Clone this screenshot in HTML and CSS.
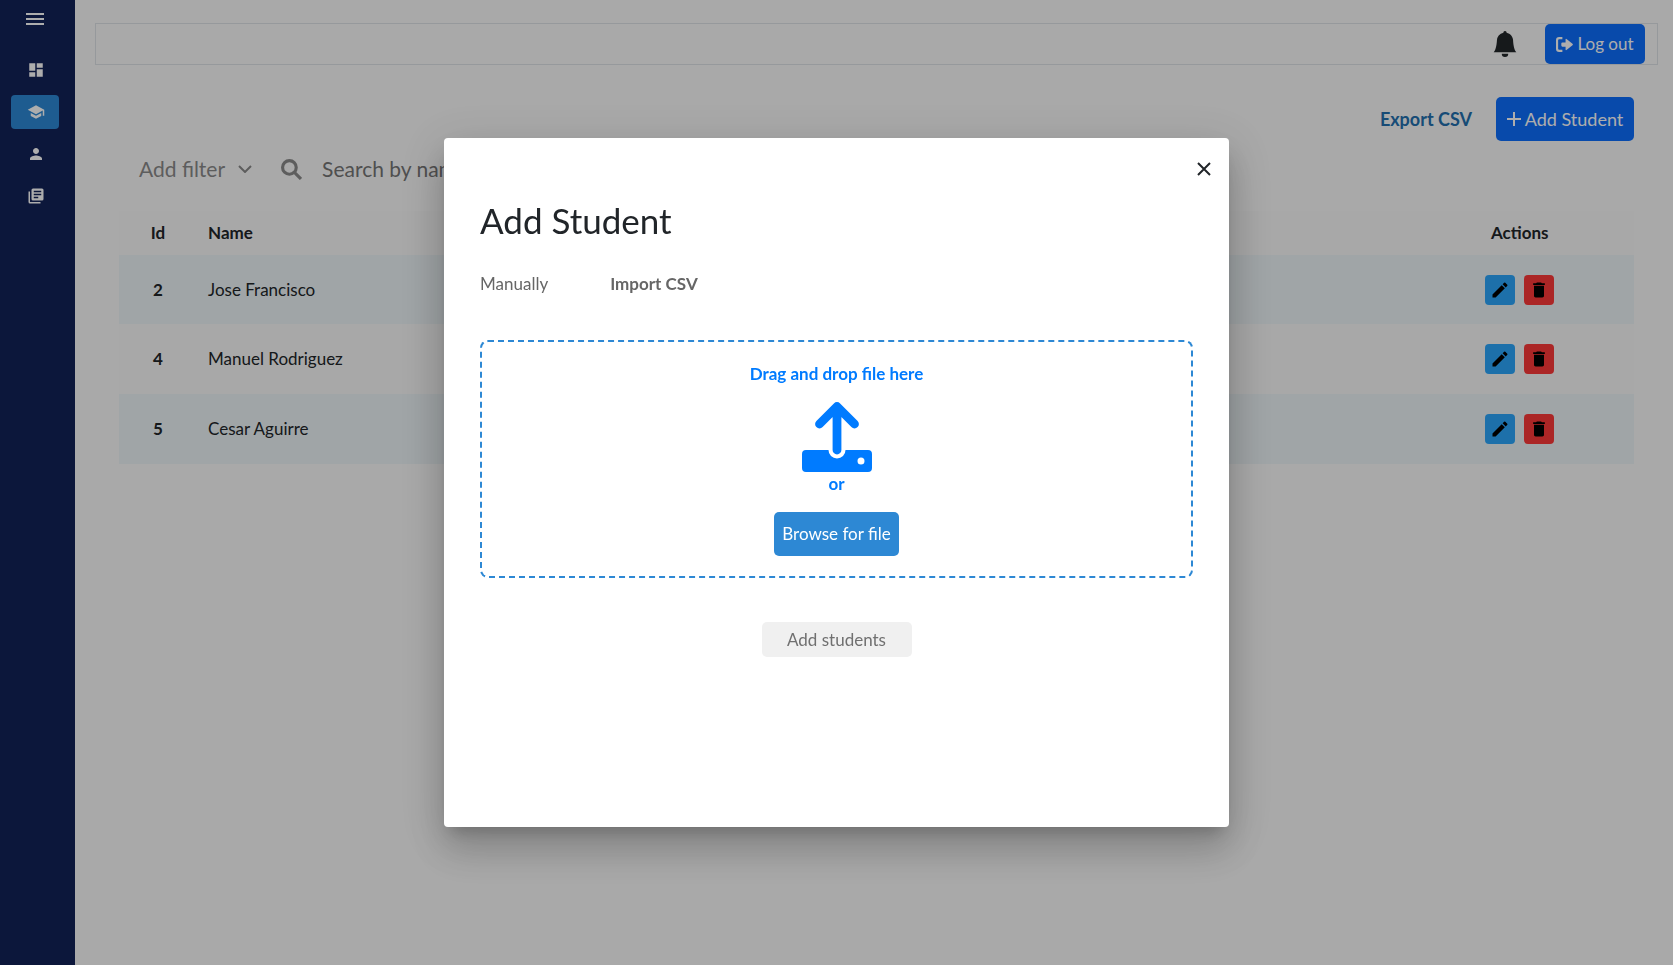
FILE: index.html
```html
<!DOCTYPE html>
<html lang="en">
<head>
<meta charset="utf-8">
<meta name="viewport" content="width=device-width, initial-scale=1">
<title>Students</title>
<link rel="stylesheet" href="styles.css">
</head>
<body>
<svg class="sprite" aria-hidden="true">
  <symbol id="pencil" viewBox="0 0 24 24"><path d="M3 17.25V21h3.75L17.81 9.94l-3.75-3.75L3 17.25zM20.71 7.04a1 1 0 0 0 0-1.41l-2.34-2.34a1 1 0 0 0-1.41 0l-1.83 1.83 3.75 3.75 1.83-1.83z"/></symbol>
  <symbol id="trash" viewBox="0 0 24 24"><path d="M6 19c0 1.100.9 2 2 2h8c1.100 0 2-.9 2-2V7H6v12zM19 4h-3.500l-1-1h-5l-1 1H5v2h14V4z"/></symbol>
</svg>
<div class="app">
  <nav class="sidebar" aria-label="Main">
    <button class="menu-button" type="button" aria-label="Menu"><svg class="menu-icon" viewBox="0 0 24 24"><path d="M3 18h18v-2H3v2zm0-5h18v-2H3v2zm0-7v2h18V6H3z"/></svg></button>
    <a class="nav-link" href="#dashboard" aria-label="Dashboard"><svg class="nav-icon" viewBox="0 0 24 24"><path d="M3 13h8V3H3v10zm0 8h8v-6H3v6zm10 0h8V11h-8v10zm0-18v6h8V3h-8z"/></svg></a>
    <a class="nav-link active" href="#students" aria-label="Students"><svg class="nav-icon" viewBox="0 0 24 24"><path d="M5 13.180v4L12 21l7-3.820v-4L12 17l-7-3.820zM12 3L1 9l11 6 9-4.910V17h2V9L12 3z"/></svg></a>
    <a class="nav-link" href="#profile" aria-label="Profile"><svg class="nav-icon" viewBox="0 0 24 24"><path d="M12 12c2.210 0 4-1.790 4-4s-1.790-4-4-4-4 1.790-4 4 1.790 4 4 4zm0 2c-2.670 0-8 1.340-8 4v2h16v-2c0-2.660-5.330-4-8-4z"/></svg></a>
    <a class="nav-link" href="#library" aria-label="Library"><svg class="nav-icon" viewBox="0 0 24 24"><path d="M4 6H2v14a2 2 0 0 0 2 2h14v-2H4V6zm16-4H8a2 2 0 0 0-2 2v12a2 2 0 0 0 2 2h12a2 2 0 0 0 2-2V4a2 2 0 0 0-2-2zm-1 9H9V9h10v2zm-4 4H9v-2h6v2zm4-8H9V5h10v2z"/></svg></a>
  </nav>
  <div class="page">
    <header class="topbar">
      <button class="bell" type="button" aria-label="Notifications"><svg class="bell-icon" viewBox="0 0 16 16"><path d="M8 16a2 2 0 0 0 2-2H6a2 2 0 0 0 2 2zm.995-14.901a1 1 0 1 0-1.990 0A5.002 5.002 0 0 0 3 6c0 1.098-.5 6-2 7h14c-1.500-1-2-5.902-2-7 0-2.420-1.720-4.440-4.005-4.901z"/></svg></button>
      <button class="button logout" type="button"><svg class="logout-icon" viewBox="0 0 16 14"><path d="M6 1H3a2 2 0 0 0-2 2v8a2 2 0 0 0 2 2h3" fill="none" stroke="currentColor" stroke-width="2"/><path d="M6 5h3V2.500q0-1.500 1.200-.5L15.500 6.200q.8.8 0 1.600L10.200 12q-1.200 1-1.200-.5V9H6q-1 0-1-1V6q0-1 1-1z"/></svg>Log out</button>
    </header>
    <main class="content">
      <div class="toolbar">
        <a class="export" href="#export">Export CSV</a>
        <button class="button add" type="button"><svg class="plus-icon" viewBox="0 0 14 14"><path d="M7 0v14M0 7h14" stroke="currentColor" stroke-width="2"/></svg>Add Student</button>
      </div>
      <div class="filters">
        <button class="filter" type="button">Add filter<svg class="chevron" viewBox="0 0 14 8"><path d="M1 1l6 6 6-6" fill="none" stroke="currentColor" stroke-width="2"/></svg></button>
        <label class="search"><svg class="search-icon" viewBox="0 0 20 20"><circle cx="8" cy="8" r="6.500" fill="none" stroke="currentColor" stroke-width="3"/><path d="M13 13l6 6" stroke="currentColor" stroke-width="3"/></svg><input class="search-input" type="search" placeholder="Search by name" aria-label="Search by name"></label>
      </div>
      <table class="students">
        <thead><tr><th class="id">Id</th><th class="name">Name</th><th class="actions">Actions</th></tr></thead>
        <tbody>
          <tr><th class="id" scope="row">2</th><td class="name">Jose Francisco</td><td class="actions"><div class="row-actions"><button class="icon-button edit" type="button" aria-label="Edit"><svg class="action-icon"><use href="#pencil"/></svg></button><button class="icon-button delete" type="button" aria-label="Delete"><svg class="action-icon"><use href="#trash"/></svg></button></div></td></tr>
          <tr><th class="id" scope="row">4</th><td class="name">Manuel Rodriguez</td><td class="actions"><div class="row-actions"><button class="icon-button edit" type="button" aria-label="Edit"><svg class="action-icon"><use href="#pencil"/></svg></button><button class="icon-button delete" type="button" aria-label="Delete"><svg class="action-icon"><use href="#trash"/></svg></button></div></td></tr>
          <tr><th class="id" scope="row">5</th><td class="name">Cesar Aguirre</td><td class="actions"><div class="row-actions"><button class="icon-button edit" type="button" aria-label="Edit"><svg class="action-icon"><use href="#pencil"/></svg></button><button class="icon-button delete" type="button" aria-label="Delete"><svg class="action-icon"><use href="#trash"/></svg></button></div></td></tr>
        </tbody>
      </table>
    </main>
  </div>
</div>
<div class="backdrop">
  <section class="modal" role="dialog" aria-modal="true" aria-labelledby="modal-title">
    <button class="close" type="button" aria-label="Close"><svg class="close-icon" viewBox="0 0 14 14"><path d="M1 1l12 12M13 1L1 13" stroke="currentColor" stroke-width="2"/></svg></button>
    <h1 class="title" id="modal-title">Add Student</h1>
    <div class="tabs" role="tablist">
      <button class="tab" type="button" role="tab" aria-selected="false">Manually</button>
      <button class="tab selected" type="button" role="tab" aria-selected="true">Import CSV</button>
    </div>
    <div class="dropzone">
      <p class="hint">Drag and drop file here</p>
      <svg class="upload-icon" viewBox="0 0 70 70"><path d="M35 5v43M17.500 22L35 4.500 52.500 22" fill="none" stroke="currentColor" stroke-width="8.800" stroke-linecap="round" stroke-linejoin="round"/><path d="M4 48h22.500a8.500 8.500 0 0 0 17 0H66a4 4 0 0 1 4 4v14a4 4 0 0 1-4 4H4a4 4 0 0 1-4-4V52a4 4 0 0 1 4-4zm55 7.500a3.500 3.500 0 1 0 0 7 3.500 3.500 0 0 0 0-7z" fill-rule="evenodd"/></svg>
      <p class="hint">or</p>
      <button class="browse" type="button">Browse for file</button>
    </div>
    <button class="submit" type="button" disabled>Add students</button>
  </section>
</div>
</body>
</html>
```
FILE: styles.css
```css
* { box-sizing: border-box; }
body { margin: 0; background: #fafafa; color: #212529; font: 17px/24px Lato, sans-serif; }
button, input { font: inherit; color: inherit; border: 0; padding: 0; background: none; }
svg { display: block; fill: currentColor; flex: none; }
p, h1 { margin: 0; }
a { text-decoration: none; }
.sprite { position: absolute; width: 0; height: 0; }

.app { display: flex; min-height: 100vh; }
.sidebar { flex: none; width: 75px; padding: 7px 16px 0 11px; background: #132257; color: #fff; display: flex; flex-direction: column; gap: 8px; }
.menu-button { display: flex; justify-content: center; margin-bottom: 14px; }
.menu-icon { width: 24px; height: 24px; }
.nav-link { display: flex; align-items: center; justify-content: center; height: 34px; padding-left: 2px; border-radius: 4px; color: #fff; }
.nav-link.active { background: #2d88d4; }
.nav-icon { width: 18px; height: 18px; }

.page { flex: 1; min-width: 0; padding: 23px 15px 0 20px; }
.topbar { display: flex; align-items: center; justify-content: flex-end; gap: 27px; height: 42px; padding-right: 12px; border: 1px solid #dee2e6; }
.bell-icon { width: 26px; height: 26px; }
.button { display: flex; align-items: center; justify-content: center; background: #0d6efd; color: #fff; border-radius: 5px; }
.logout { width: 100px; height: 40px; gap: 4px; }
.logout-icon { width: 17px; height: 15px; }

.content { padding: 32px 24px 0 24px; }
.toolbar { display: flex; align-items: center; justify-content: flex-end; gap: 24px; }
.export { color: #226fae; font-size: 18px; font-weight: 700; }
.add { width: 138px; height: 44px; gap: 4px; font-size: 18px; }
.plus-icon { width: 14px; height: 14px; }
.filters { display: flex; align-items: center; gap: 29px; height: 56px; padding-left: 20px; color: #8a8a8a; font-size: 21px; }
.filter { display: flex; align-items: center; gap: 13px; }
.chevron { width: 14px; height: 8px; }
.search { flex: 1; display: flex; align-items: center; gap: 20px; }
.search-icon { width: 21px; height: 21px; }
.search-input { flex: 1; min-width: 0; outline: 0; }
.search-input::placeholder { color: #757575; opacity: 1; }

.students { width: 100%; margin-top: 14px; border-collapse: collapse; background: #f8f8f8; text-align: left; }
.students th, .students td { padding: 0; height: 70px; }
.students thead th { height: 44px; }
.students tbody tr:first-child > * { height: 69px; }
.students tbody tr:nth-child(odd) { background: #ecf3f6; }
.students .id { width: 89px; padding-right: 11px; text-align: center; }
.students .actions { width: 149px; }
.students thead .actions { padding-left: 6px; }
.row-actions { display: flex; gap: 9px; }
.icon-button { display: flex; align-items: center; justify-content: center; width: 30px; height: 30px; border-radius: 4px; color: #000; }
.edit { background: #2ba6fb; }
.delete { background: #fd3838; }
.action-icon { width: 20px; height: 20px; }

.backdrop { position: fixed; inset: 0; display: flex; align-items: center; justify-content: center; background: rgba(0, 0, 0, .32); }
.modal { display: flex; flex-direction: column; width: 785px; max-width: 80vw; min-height: 689px; padding: 24px 36px; border-radius: 4px; background: #fff; box-shadow: 0 11px 15px -7px rgba(0, 0, 0, .2), 0 24px 38px 3px rgba(0, 0, 0, .14), 0 9px 46px 8px rgba(0, 0, 0, .12); }
.close { align-self: flex-end; padding: 0 8px; margin-right: -26px; }
.close-icon { width: 14px; height: 14px; }
.title { margin-top: 24px; font-size: 35px; line-height: 40px; font-weight: 400; }
.tabs { display: flex; gap: 62px; margin-top: 32px; color: #666; }
.selected { font-weight: 700; }
.dropzone { display: flex; flex-direction: column; align-items: center; margin-top: 44px; padding: 20px; border: 2px dashed #2d88d4; border-radius: 8px; color: #007bff; }
.hint { font-weight: 700; }
.upload-icon { width: 70px; height: 70px; margin-top: 16px; }
.browse { height: 44px; width: 125px; margin-top: 16px; border-radius: 5px; background: #2d88d4; color: #fff; }
.submit { align-self: center; width: 150px; height: 35px; margin-top: 44px; border-radius: 5px; background: #f0f0f0; color: #707070; }
```
